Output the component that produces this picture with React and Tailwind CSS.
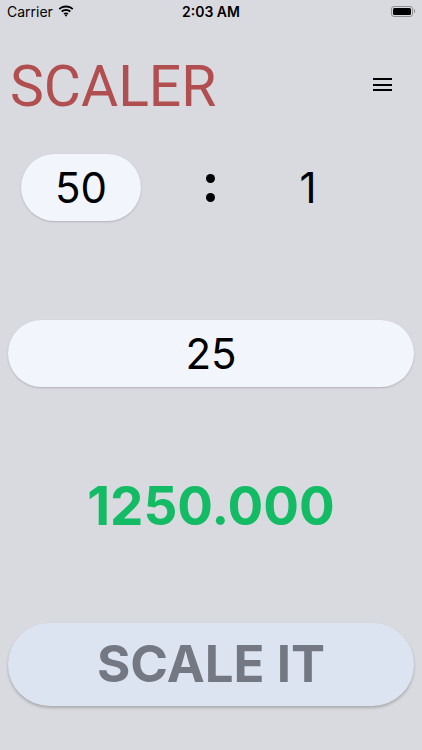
const Wifi = () => (
  <svg width="16" height="12" viewBox="0 0 15 11" fill="#000">
    <path d="M7.5 2.2c2.2 0 4.2.8 5.7 2.2l1.2-1.3C12.6 1.4 10.2.4 7.5.4S2.4 1.4.6 3.1l1.2 1.3c1.5-1.4 3.5-2.2 5.7-2.2z" />
    <path d="M7.5 5.4c1.3 0 2.5.5 3.4 1.3l1.2-1.3C10.9 4.3 9.3 3.6 7.5 3.6S4.1 4.3 2.9 5.4l1.2 1.3c.9-.8 2.1-1.3 3.4-1.3z" />
    <path d="M7.5 8.6c.5 0 .9.2 1.2.5l1.2-1.3c-.6-.6-1.5-1-2.4-1s-1.8.4-2.4 1l1.2 1.3c.3-.3.7-.5 1.2-.5zM7.5 10.8l1.2-1.2c-.3-.3-.7-.5-1.2-.5s-.9.2-1.2.5z" />
  </svg>
)

const Battery = () => (
  <div className="flex items-center">
    <div className="w-[22px] h-[11px] rounded-[3px] border border-[#8e8f93] p-[1px]">
      <div className="w-full h-full rounded-[1.5px] bg-black" />
    </div>
    <div className="w-[1.5px] h-[4px] rounded-r bg-[#8e8f93] ml-[1px]" />
  </div>
)

const App = () => {
  return (
    <div className="min-h-screen w-full bg-[#d9dadf] flex flex-col" style={{ fontFamily: 'Inter, "Liberation Sans", sans-serif' }}>
      <div className="h-[22px] relative flex items-center px-[7px] text-[14px] text-black">
        <div className="flex items-center gap-[5px]">
          <span>Carrier</span>
          <Wifi />
        </div>
        <span className="absolute left-1/2 -translate-x-1/2 font-semibold">2:03 AM</span>
        <div className="ml-auto">
          <Battery />
        </div>
      </div>

      <div className="flex items-center justify-between pt-[36px] pl-[10px] pr-[30px]">
        <h1 className="text-[57px] leading-none text-[#b14f50]" style={{ fontFamily: 'Roboto, sans-serif' }}>
          SCALER
        </h1>
        <button className="flex flex-col gap-[3.5px] -mt-[4px]">
          <span className="block w-[19px] h-[2px] bg-black" />
          <span className="block w-[19px] h-[2px] bg-black" />
          <span className="block w-[19px] h-[2px] bg-black" />
        </button>
      </div>

      <div className="flex items-center mt-[39px]">
        <div className="ml-[21px] w-[120px] h-[67px] rounded-full bg-[#f2f6fc] shadow-[0_1px_2px_rgba(0,0,0,0.18)] flex items-center justify-center text-[42px] text-black">
          50
        </div>
        <div className="ml-[59px] w-[20px] flex flex-col items-center gap-[10px]">
          <span className="block w-[9px] h-[9px] rounded-full bg-black" />
          <span className="block w-[9px] h-[9px] rounded-full bg-black" />
        </div>
        <div className="ml-[58px] w-[60px] text-center text-[42px] text-black">1</div>
      </div>

      <div className="mx-[8px] mt-[99px] h-[67px] rounded-full bg-[#f2f6fc] shadow-[0_1px_2px_rgba(0,0,0,0.18)] flex items-center justify-center text-[42px] text-black">
        25
      </div>

      <div className="mt-[93px] text-center text-[53px] leading-none font-bold text-[#12bb64]">
        1250.000
      </div>

      <button className="mx-[8px] mt-[90px] h-[83px] rounded-full bg-[#dde4f1] shadow-[0_2px_3px_rgba(0,0,0,0.22)] flex items-center justify-center text-[51px] font-bold text-[#747883]">
        SCALE IT
      </button>
    </div>
  )
}

export default App
